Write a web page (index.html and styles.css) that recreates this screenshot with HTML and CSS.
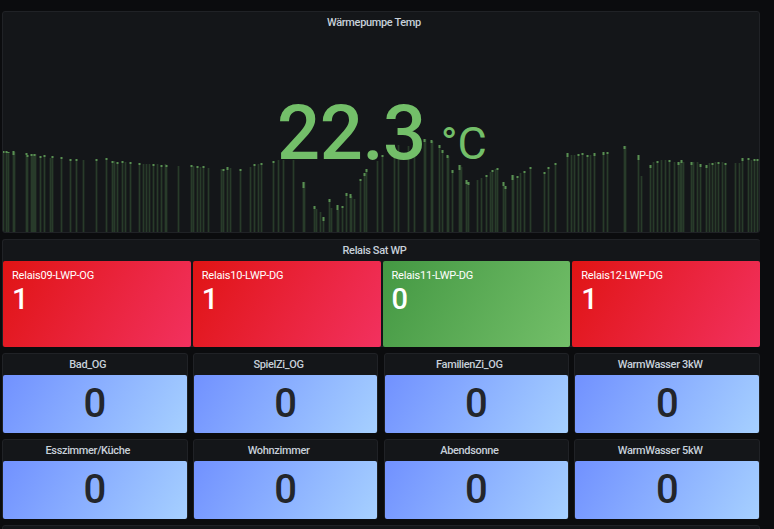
FILE: index.html
```html
<!DOCTYPE html>
<html lang="en">
<head>
    <meta charset="UTF-8">
    <meta name="viewport" content="width=device-width, initial-scale=1.0">
    <title>Wärmepumpe</title>
    <link rel="stylesheet" href="styles.css">
</head>
<body>

    <section class="panel temp-panel">
        <!-- sparkline hinter dem Wert -->
        <svg class="spark" viewBox="2 100 758 133" preserveAspectRatio="none">
            <path class="spark-bars" d="M3.5 151V233M6.5 151V233M8.5 152V233M13.5 151V233M14.5 152V233M26.5 153V233M27.5 155V233M31.5 154V233M32.5 154V233M33.5 154V233M34.5 154V233M35.5 154V233M40.5 156V233M44.5 155V233M50.5 158V233M52.5 156V233M61.5 157V233M70.5 159V233M76.5 159V233M83.5 160V233M96.5 159V233M106.5 158V233M112.5 161V233M114.5 161V233M117.5 162V233M122.5 161V233M125.5 162V233M130.5 162V233M139.5 163V233M143.5 164V233M146.5 164V233M149.5 164V233M153.5 164V233M157.5 164V233M161.5 165V233M165.5 164V233M166.5 165V233M178.5 166V233M191.5 165V233M193.5 166V233M197.5 166V233M200.5 167V233M203.5 166V233M208.5 168V233M221.5 169V233M223.5 169V233M227.5 167V233M230.5 168V233M240.5 169V233M250.5 167V233M254.5 164V233M258.5 164V233M261.5 163V233M273.5 161V233M278.5 160V233M283.5 160V233M293.5 160V233M303.5 182V233M304.5 182V233M314.5 206V233M316.5 209V233M320.5 212V233M323.5 217V233M329.5 199V233M331.5 208V233M337.5 205V233M338.5 210V233M342.5 206V233M346.5 193V233M350.5 194V233M351.5 196V233M354.5 199V233M360.5 179V233M364.5 173V233M366.5 169V233M377.5 161V233M382.5 155V233M394.5 146V233M398.5 145V233M408.5 146V233M414.5 146V233M424.5 139V233M425.5 139V233M431.5 140V233M432.5 141V233M439.5 145V233M442.5 150V233M447.5 155V233M448.5 156V233M452.5 170V233M459.5 165V233M460.5 165V233M461.5 167V233M466.5 180V233M468.5 182V233M477.5 180V233M481.5 178V233M486.5 175V233M490.5 172V233M492.5 170V233M495.5 169V233M497.5 168V233M503.5 182V233M505.5 186V233M512.5 175V233M513.5 175V233M517.5 176V233M520.5 173V233M524.5 171V233M530.5 167V233M544.5 172V233M548.5 167V233M555.5 163V233M567.5 153V233M571.5 155V233M574.5 155V233M578.5 154V233M582.5 153V233M587.5 155V233M590.5 155V233M594.5 153V233M603.5 152V233M607.5 152V233M624.5 146V233M625.5 146V233M638.5 155V233M641.5 176V233M650.5 165V233M653.5 162V233M657.5 161V233M661.5 160V233M665.5 160V233M669.5 160V233M674.5 162V233M678.5 162V233M680.5 162V233M681.5 160V233M683.5 162V233M691.5 162V233M693.5 162V233M697.5 162V233M700.5 164V233M706.5 165V233M709.5 163V233M712.5 163V233M715.5 162V233M718.5 162V233M722.5 162V233M725.5 163V233M735.5 163V233M739.5 163V233M742.5 158V233M748.5 158V233M751.5 160V233M754.5 159V233M757.5 159V233"/>
            <path class="spark-caps" d="M3.5 151v2M6.5 151v2M8.5 152v1M13.5 151v4M26.5 153v2M27.5 155v2M31.5 154v2M34.5 154v2M40.5 156v2M44.5 155v2M52.5 156v2M61.5 157v2M70.5 159v2M76.5 159v2M96.5 159v2M106.5 158v2M112.5 161v2M117.5 162v2M122.5 161v2M130.5 162v2M139.5 163v2M153.5 164v2M161.5 165v2M166.5 165v2M191.5 165v2M197.5 166v2M203.5 166v2M223.5 169v2M227.5 167v3M240.5 169v2M254.5 164v2M261.5 163v2M273.5 161v2M303.5 182v6M314.5 206v3M323.5 217v4M329.5 199v3M337.5 205v5M342.5 206v2M346.5 193v3M350.5 194v4M360.5 179v2M364.5 173v3M366.5 169v3M382.5 155v2M424.5 139v3M431.5 140v3M439.5 145v3M442.5 150v3M447.5 155v3M452.5 170v3M459.5 165v5M466.5 180v4M468.5 182v3M486.5 175v2M492.5 170v2M497.5 168v2M503.5 182v4M505.5 186v3M512.5 175v5M517.5 176v2M524.5 171v2M530.5 167v2M544.5 172v2M548.5 167v2M555.5 163v2M567.5 153v4M578.5 154v2M582.5 153v2M587.5 155v2M594.5 153v3M603.5 152v3M607.5 152v2M624.5 146v3M638.5 155v5M650.5 165v3M657.5 161v2M669.5 160v2M678.5 162v3M681.5 160v3M691.5 162v3M700.5 164v3M706.5 165v3M712.5 163v2M718.5 162v2M725.5 163v2M742.5 158v3M748.5 158v2M754.5 159v2M757.5 159v2"/>
        </svg>
        <h2 class="panel-title">Wärmepumpe Temp</h2>
        <div class="temp-value">22.3<span class="temp-unit">°C</span></div>
    </section>

    <section class="panel relais-panel">
        <h2 class="panel-title">Relais Sat WP</h2>
        <div class="relais-grid">
            <div class="relais red">
                <div class="relais-name">Relais09-LWP-OG</div>
                <div class="relais-value">1</div>
            </div>
            <div class="relais red">
                <div class="relais-name">Relais10-LWP-DG</div>
                <div class="relais-value">1</div>
            </div>
            <div class="relais green">
                <div class="relais-name">Relais11-LWP-DG</div>
                <div class="relais-value">0</div>
            </div>
            <div class="relais red">
                <div class="relais-name">Relais12-LWP-DG</div>
                <div class="relais-value">1</div>
            </div>
        </div>
    </section>

    <div class="room-grid">
        <section class="panel room">
            <h2 class="panel-title">Bad_OG</h2>
            <div class="room-value">0</div>
        </section>
        <section class="panel room">
            <h2 class="panel-title">SpielZi_OG</h2>
            <div class="room-value">0</div>
        </section>
        <section class="panel room">
            <h2 class="panel-title">FamilienZi_OG</h2>
            <div class="room-value">0</div>
        </section>
        <section class="panel room">
            <h2 class="panel-title">WarmWasser 3kW</h2>
            <div class="room-value">0</div>
        </section>
        <section class="panel room">
            <h2 class="panel-title">Esszimmer/Küche</h2>
            <div class="room-value">0</div>
        </section>
        <section class="panel room">
            <h2 class="panel-title">Wohnzimmer</h2>
            <div class="room-value">0</div>
        </section>
        <section class="panel room">
            <h2 class="panel-title">Abendsonne</h2>
            <div class="room-value">0</div>
        </section>
        <section class="panel room">
            <h2 class="panel-title">WarmWasser 5kW</h2>
            <div class="room-value">0</div>
        </section>
    </div>

    <section class="panel next-panel"></section>

</body>
</html>
```

FILE: styles.css
```css
html, body {
    height: 100%;
}

body {
    font-family: Roboto, 'Liberation Sans', sans-serif;
    background-color: #0b0c0e;
    margin: 0;
    padding: 11px 14px 0 2px;
    box-sizing: border-box;
    overflow: hidden;
    display: flex;
    flex-direction: column;
    gap: 6px;
}

.panel {
    background-color: #141619;
    border: 1px solid #202226;
    border-radius: 3px;
    box-sizing: border-box;
    flex-shrink: 0;
}

.panel-title {
    margin: 0;
    height: 21px;
    padding-right: 14px;
    line-height: 21px;
    font-size: 11px;
    font-weight: 500;
    letter-spacing: -0.35px;
    color: #c7d0d9;
    text-align: center;
}

/* Temperatur */
.temp-panel {
    position: relative;
    height: 222px;
    overflow: hidden;
}

.spark {
    position: absolute;
    left: -1px;
    bottom: -1px;
    width: 758px;
    height: 133px;
}

.spark-bars {
    fill: none;
    stroke: #73bf69;
    stroke-opacity: 0.22;
    stroke-width: 1.75;
}

.spark-caps {
    fill: none;
    stroke: #73bf69;
    stroke-opacity: 0.65;
    stroke-width: 2;
}

.temp-value {
    position: relative;
    margin-top: 55px;
    padding-left: 2px;
    line-height: 90px;
    font-size: 76px;
    font-weight: 500;
    letter-spacing: -0.5px;
    color: #73bf69;
    text-align: center;
}

.temp-unit {
    margin-left: 15px;
    font-size: 45px;
    font-weight: 400;
    letter-spacing: 0;
}

/* Relais */
.relais-panel {
    height: 108px;
    border-right: 0;
}

.relais-grid {
    display: grid;
    grid-template-columns: repeat(4, 1fr);
    gap: 2px;
}

.relais {
    height: 86px;
    padding: 8px 9px;
    box-sizing: border-box;
    border-radius: 2px;
    color: #fff;
}

.red {
    background: linear-gradient(120deg, #e01414, #f2315f);
}

.green {
    background: linear-gradient(120deg, #449843, #73bf69);
}

.relais-name {
    font-size: 11px;
    letter-spacing: -0.2px;
    line-height: 14px;
}

.relais-value {
    font-size: 29px;
    font-weight: 500;
    line-height: 32px;
}

/* Räume */
.room-grid {
    display: grid;
    grid-template-columns: repeat(4, 1fr);
    gap: 6px 5.33px;
}

.room {
    height: 80px;
}

.room-value {
    height: 58px;
    line-height: 58px;
    font-size: 40px;
    font-weight: 500;
    color: #23262b;
    text-align: center;
    border-radius: 2px;
    background: linear-gradient(120deg, #7191ff, #a6d0ff);
}

.next-panel {
    height: 20px;
}
```
